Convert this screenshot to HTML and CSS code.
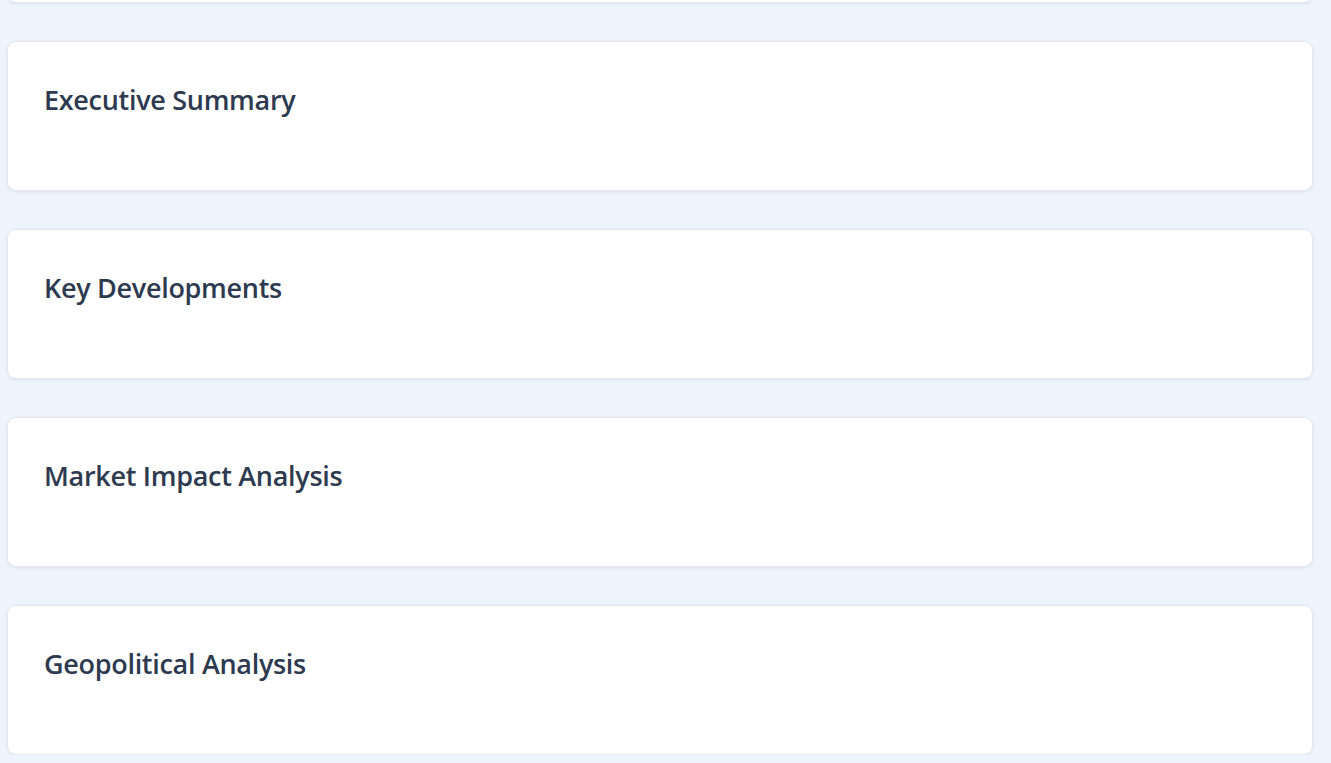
FILE: index.html
```html
<!DOCTYPE html>
<html lang="en">
<head>
<meta charset="utf-8">
<title>Report</title>
<link rel="stylesheet" href="styles.css">
</head>
<body>
<main class="sections">
  <section class="card card-clipped" aria-hidden="true"></section>
  <section class="card"><h2 class="card-title">Executive Summary</h2></section>
  <section class="card"><h2 class="card-title">Key Developments</h2></section>
  <section class="card"><h2 class="card-title">Market Impact Analysis</h2></section>
  <section class="card"><h2 class="card-title">Geopolitical Analysis</h2></section>
</main>
</body>
</html>
```
FILE: styles.css
```css
html, body {
  margin: 0;
  padding: 0;
  background: #eef4fe;
  overflow: hidden;
}
body {
  font-family: "Open Sans", "Noto Sans", sans-serif;
}
.sections {
  display: flex;
  flex-direction: column;
  gap: 38px;
  padding: 0 18px 0 7px;
}
.card {
  box-sizing: border-box;
  height: 150px;
  background: #ffffff;
  border: 1px solid #e3e8ef;
  border-radius: 9px;
  box-shadow: 0 1px 3px rgba(30, 41, 59, 0.09);
  padding: 36px 36px;
}
.card-clipped {
  margin-top: -147px;
}
.card-title {
  margin: 0;
  font-size: 27px;
  font-weight: 600;
  letter-spacing: -0.3px;
  line-height: 44px;
  color: #2d3a4f;
}
```
